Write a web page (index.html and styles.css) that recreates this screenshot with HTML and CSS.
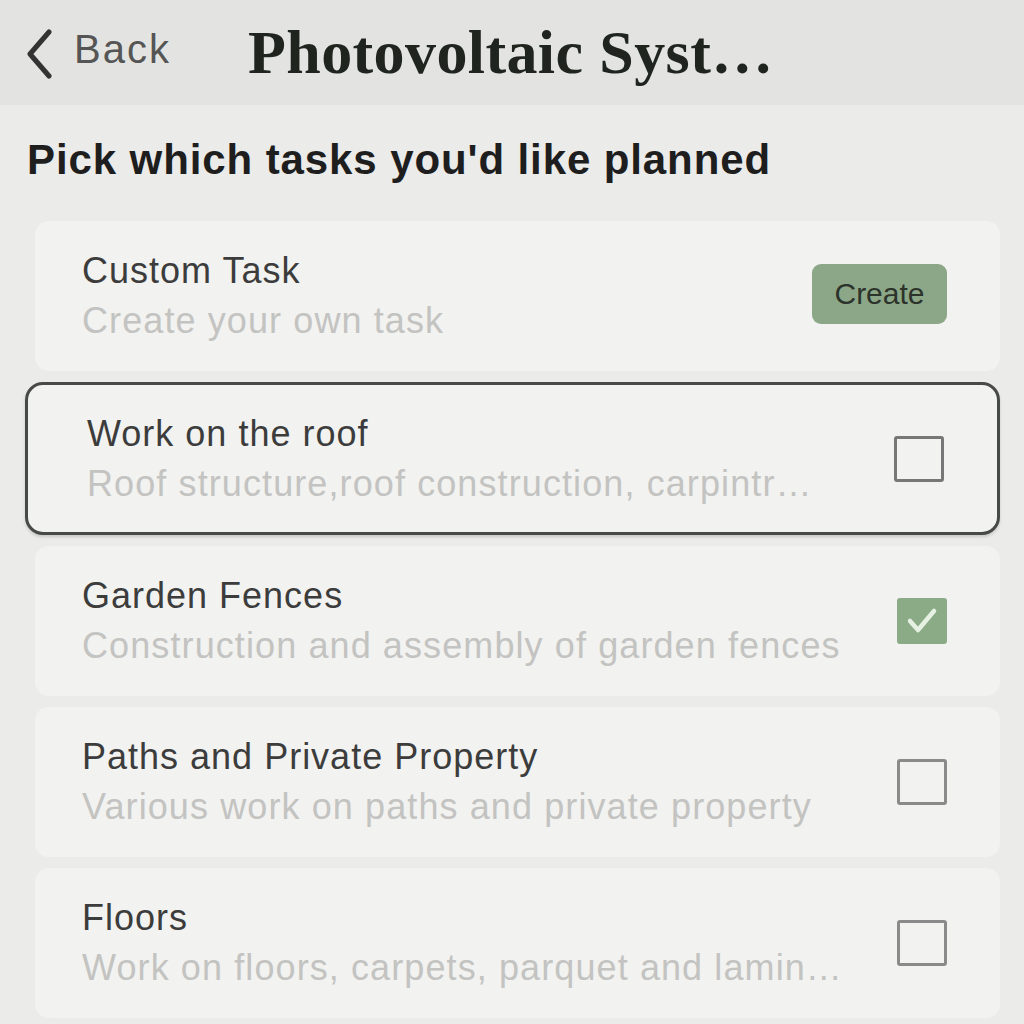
FILE: index.html
```html
<!DOCTYPE html>
<html lang="en">
<head>
<meta charset="utf-8">
<title>Photovoltaic System</title>
<link rel="stylesheet" href="styles.css">
</head>
<body>
<header class="topbar">
  <a class="back" href="#">
    <svg class="chev" width="34" height="50" viewBox="0 0 34 50"><path d="M27 3 L8 25 L27 47" fill="none" stroke="#333" stroke-width="5" stroke-linecap="round" stroke-linejoin="round"/></svg>
    <span class="back-label">Back</span>
  </a>
  <h1 class="title">Photovoltaic Syst…</h1>
</header>
<main class="content">
  <h2 class="heading">Pick which tasks you'd like planned</h2>
  <ul class="tasks">
    <li class="card">
      <div class="text">
        <div class="name">Custom Task</div>
        <div class="desc">Create your own task</div>
      </div>
      <button class="create">Create</button>
    </li>
    <li class="card selected">
      <div class="text">
        <div class="name">Work on the roof</div>
        <div class="desc">Roof structure,roof construction, carpintr…</div>
      </div>
      <span class="box"></span>
    </li>
    <li class="card">
      <div class="text">
        <div class="name">Garden Fences</div>
        <div class="desc">Construction and assembly of garden fences</div>
      </div>
      <span class="box checked"><svg width="36" height="34" viewBox="0 0 36 34"><path d="M6 17 L14 26 L30 7" fill="none" stroke="#e6f1e3" stroke-width="4.5" stroke-linecap="round" stroke-linejoin="round"/></svg></span>
    </li>
    <li class="card">
      <div class="text">
        <div class="name">Paths and Private Property</div>
        <div class="desc">Various work on paths and private property</div>
      </div>
      <span class="box"></span>
    </li>
    <li class="card">
      <div class="text">
        <div class="name">Floors</div>
        <div class="desc">Work on floors, carpets, parquet and lamin…</div>
      </div>
      <span class="box"></span>
    </li>
  </ul>
</main>
</body>
</html>
```
FILE: styles.css
```css
* { box-sizing: border-box; }
html, body { margin: 0; padding: 0; }
body {
  width: 1024px;
  height: 1024px;
  overflow: hidden;
  background: #ebebe9;
  font-family: "Liberation Sans", Arial, sans-serif;
}
.topbar {
  height: 105px;
  background: #e3e4e1;
  display: flex;
  align-items: center;
  padding-left: 22px;
}
.back {
  display: flex;
  align-items: center;
  text-decoration: none;
  width: 226px;
}
.chev { margin-right: 18px; margin-top: 2px; }
.back-label {
  font-size: 40px;
  letter-spacing: 2px;
  color: #555;
  margin-top: -6px;
}
.title {
  margin: 0;
  font-family: "Liberation Serif", "Times New Roman", serif;
  font-weight: bold;
  font-size: 62px;
  color: #1f241f;
  letter-spacing: 0.4px;
}
.content { padding: 0 24px 0 27px; }
.heading {
  margin: 30px 0 0 0;
  height: 86px;
  font-size: 42px;
  line-height: 50px;
  font-weight: bold;
  letter-spacing: 0.9px;
  color: #1e1e1e;
}
.tasks {
  list-style: none;
  margin: 0;
  padding: 0 0 0 8px;
  display: flex;
  flex-direction: column;
  gap: 11px;
}
.card {
  height: 150px;
  background: #f2f2f0;
  border-radius: 14px;
  display: flex;
  align-items: center;
  padding: 0 53px 0 47px;
}
.card.selected {
  margin-left: -10px;
  border: 3px solid #474a47;
  border-radius: 18px;
  padding-left: 59px;
  height: 153px;
  box-shadow: 0 2px 3px rgba(0,0,0,0.15);
}
.text { flex: 1; min-width: 0; }
.name {
  font-size: 36px;
  line-height: 44px;
  letter-spacing: 1px;
  color: #3c3c3c;
}
.desc {
  margin-top: 6px;
  font-size: 36px;
  line-height: 44px;
  letter-spacing: 1.1px;
  color: #c3c3c1;
  white-space: nowrap;
  overflow: hidden;
}
.create {
  width: 135px;
  height: 60px;
  border: none;
  border-radius: 9px;
  background: #8ca787;
  color: #2c332b;
  font-family: "Liberation Sans", Arial, sans-serif;
  font-size: 30px;
  padding: 0;
  margin-top: -4px;
}
.box {
  width: 50px;
  height: 46px;
  border: 3px solid #8a8a8a;
  border-radius: 3px;
  display: flex;
  align-items: center;
  justify-content: center;
  flex-shrink: 0;
}
.selected .box { border-color: #777; }
.box.checked {
  background: #8aab86;
  border-color: #8aab86;
}
```
